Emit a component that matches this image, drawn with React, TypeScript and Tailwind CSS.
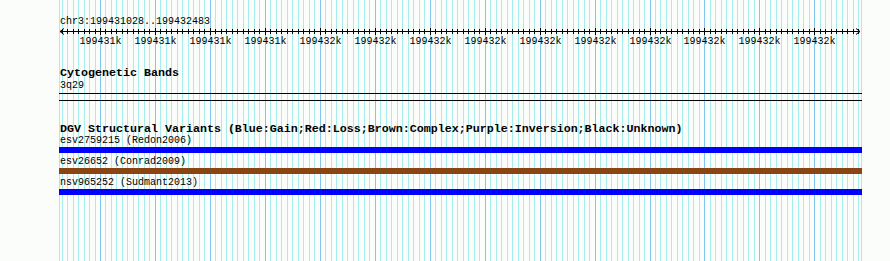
import React from 'react';

const TRACK_W = 803;
const ORIGIN = 59;

// grid positions, one every 5.495px, major every 10th
const grid = Array.from({ length: 146 }, (_, j) => {
  const i = j - 7;
  return { x: Math.round(100 + 5.495 * i) - ORIGIN, major: i % 10 === 0, i };
}).filter((g) => g.x > 1 && g.x < TRACK_W - 1);

const majors = grid.filter((g) => g.major);

const features = [
  { name: 'esv2759215 (Redon2006)', color: 'bg-[#0000ff]' },
  { name: 'esv26652 (Conrad2009)', color: 'bg-[#8b4513]' },
  { name: 'nsv965252 (Sudmant2013)', color: 'bg-[#0000ff]' },
];

const Ruler: React.FC = () => (
  <svg width={TRACK_W} height={18} viewBox={`0 0 ${TRACK_W} 18`} className="block" shapeRendering="crispEdges">
    <line x1={1} y1={3.5} x2={801} y2={3.5} stroke="#000" />
    {grid.map((g) => (
      <line
        key={g.i}
        x1={g.x + 0.5}
        x2={g.x + 0.5}
        y1={g.major ? 0 : 1}
        y2={g.major ? 7 : 6}
        stroke="#000"
      />
    ))}
    <polyline points="5,0.5 1,3.5 5,6.5" fill="none" stroke="#000" shapeRendering="auto" />
    <polyline points="797,0.5 801,3.5 797,6.5" fill="none" stroke="#000" shapeRendering="auto" />
    {majors.map((g, k) => (
      <text
        key={g.i}
        x={g.x + 0.5}
        y={16}
        textAnchor="middle"
        fontSize={10}
        fontFamily="'Liberation Mono', monospace"
        fill="#000"
      >
        {k < 4 ? '199431k' : '199432k'}
      </text>
    ))}
  </svg>
);

const App: React.FC = () => {
  return (
    <div className="w-[890px] h-[261px] bg-[#fbfdfb] overflow-hidden font-['Liberation_Mono',monospace] text-black">
      <div className="relative ml-[59px] w-[803px] h-[261px] overflow-hidden">
        {/* gridlines */}
        <div className="absolute left-0 top-0 h-full w-px bg-[#a8eded]" />
        {grid.map((g) => (
          <div
            key={g.i}
            className={`absolute top-0 h-full w-px ${g.major ? 'bg-[#80c6ee]' : 'bg-[#a8eded]'}`}
            style={{ left: g.x }}
          />
        ))}
        <div className="absolute right-0 top-0 h-full w-px bg-[#a8eded]" />

        <div className="relative pt-[16px]">
          <div className="h-[12px] leading-[12px] text-[10px] pl-px">chr3:199431028..199432483</div>
          <Ruler />

          {/* Cytogenetic bands */}
          <div className="mt-[21px] h-[13px] leading-[13px] text-[11.67px] font-bold pl-px">
            Cytogenetic Bands
          </div>
          <div className="h-[12px] leading-[12px] text-[10px] pl-px">3q29</div>
          <div className="mt-[1px] h-px bg-black" />
          <div className="mt-[6px] h-px bg-black" />

          {/* DGV */}
          <div className="mt-[22px] h-[12px] leading-[12px] text-[11.67px] font-bold pl-px whitespace-nowrap">
            DGV Structural Variants (Blue:Gain;Red:Loss;Brown:Complex;Purple:Inversion;Black:Unknown)
          </div>
          <div className="flex flex-col gap-[3px]">
            {features.map((f) => (
              <div key={f.name}>
                <div className="h-[12px] leading-[12px] text-[10px] pl-px whitespace-nowrap">{f.name}</div>
                <div className={`h-[6px] ${f.color}`} />
              </div>
            ))}
          </div>
        </div>
      </div>
    </div>
  );
};

export default App;
